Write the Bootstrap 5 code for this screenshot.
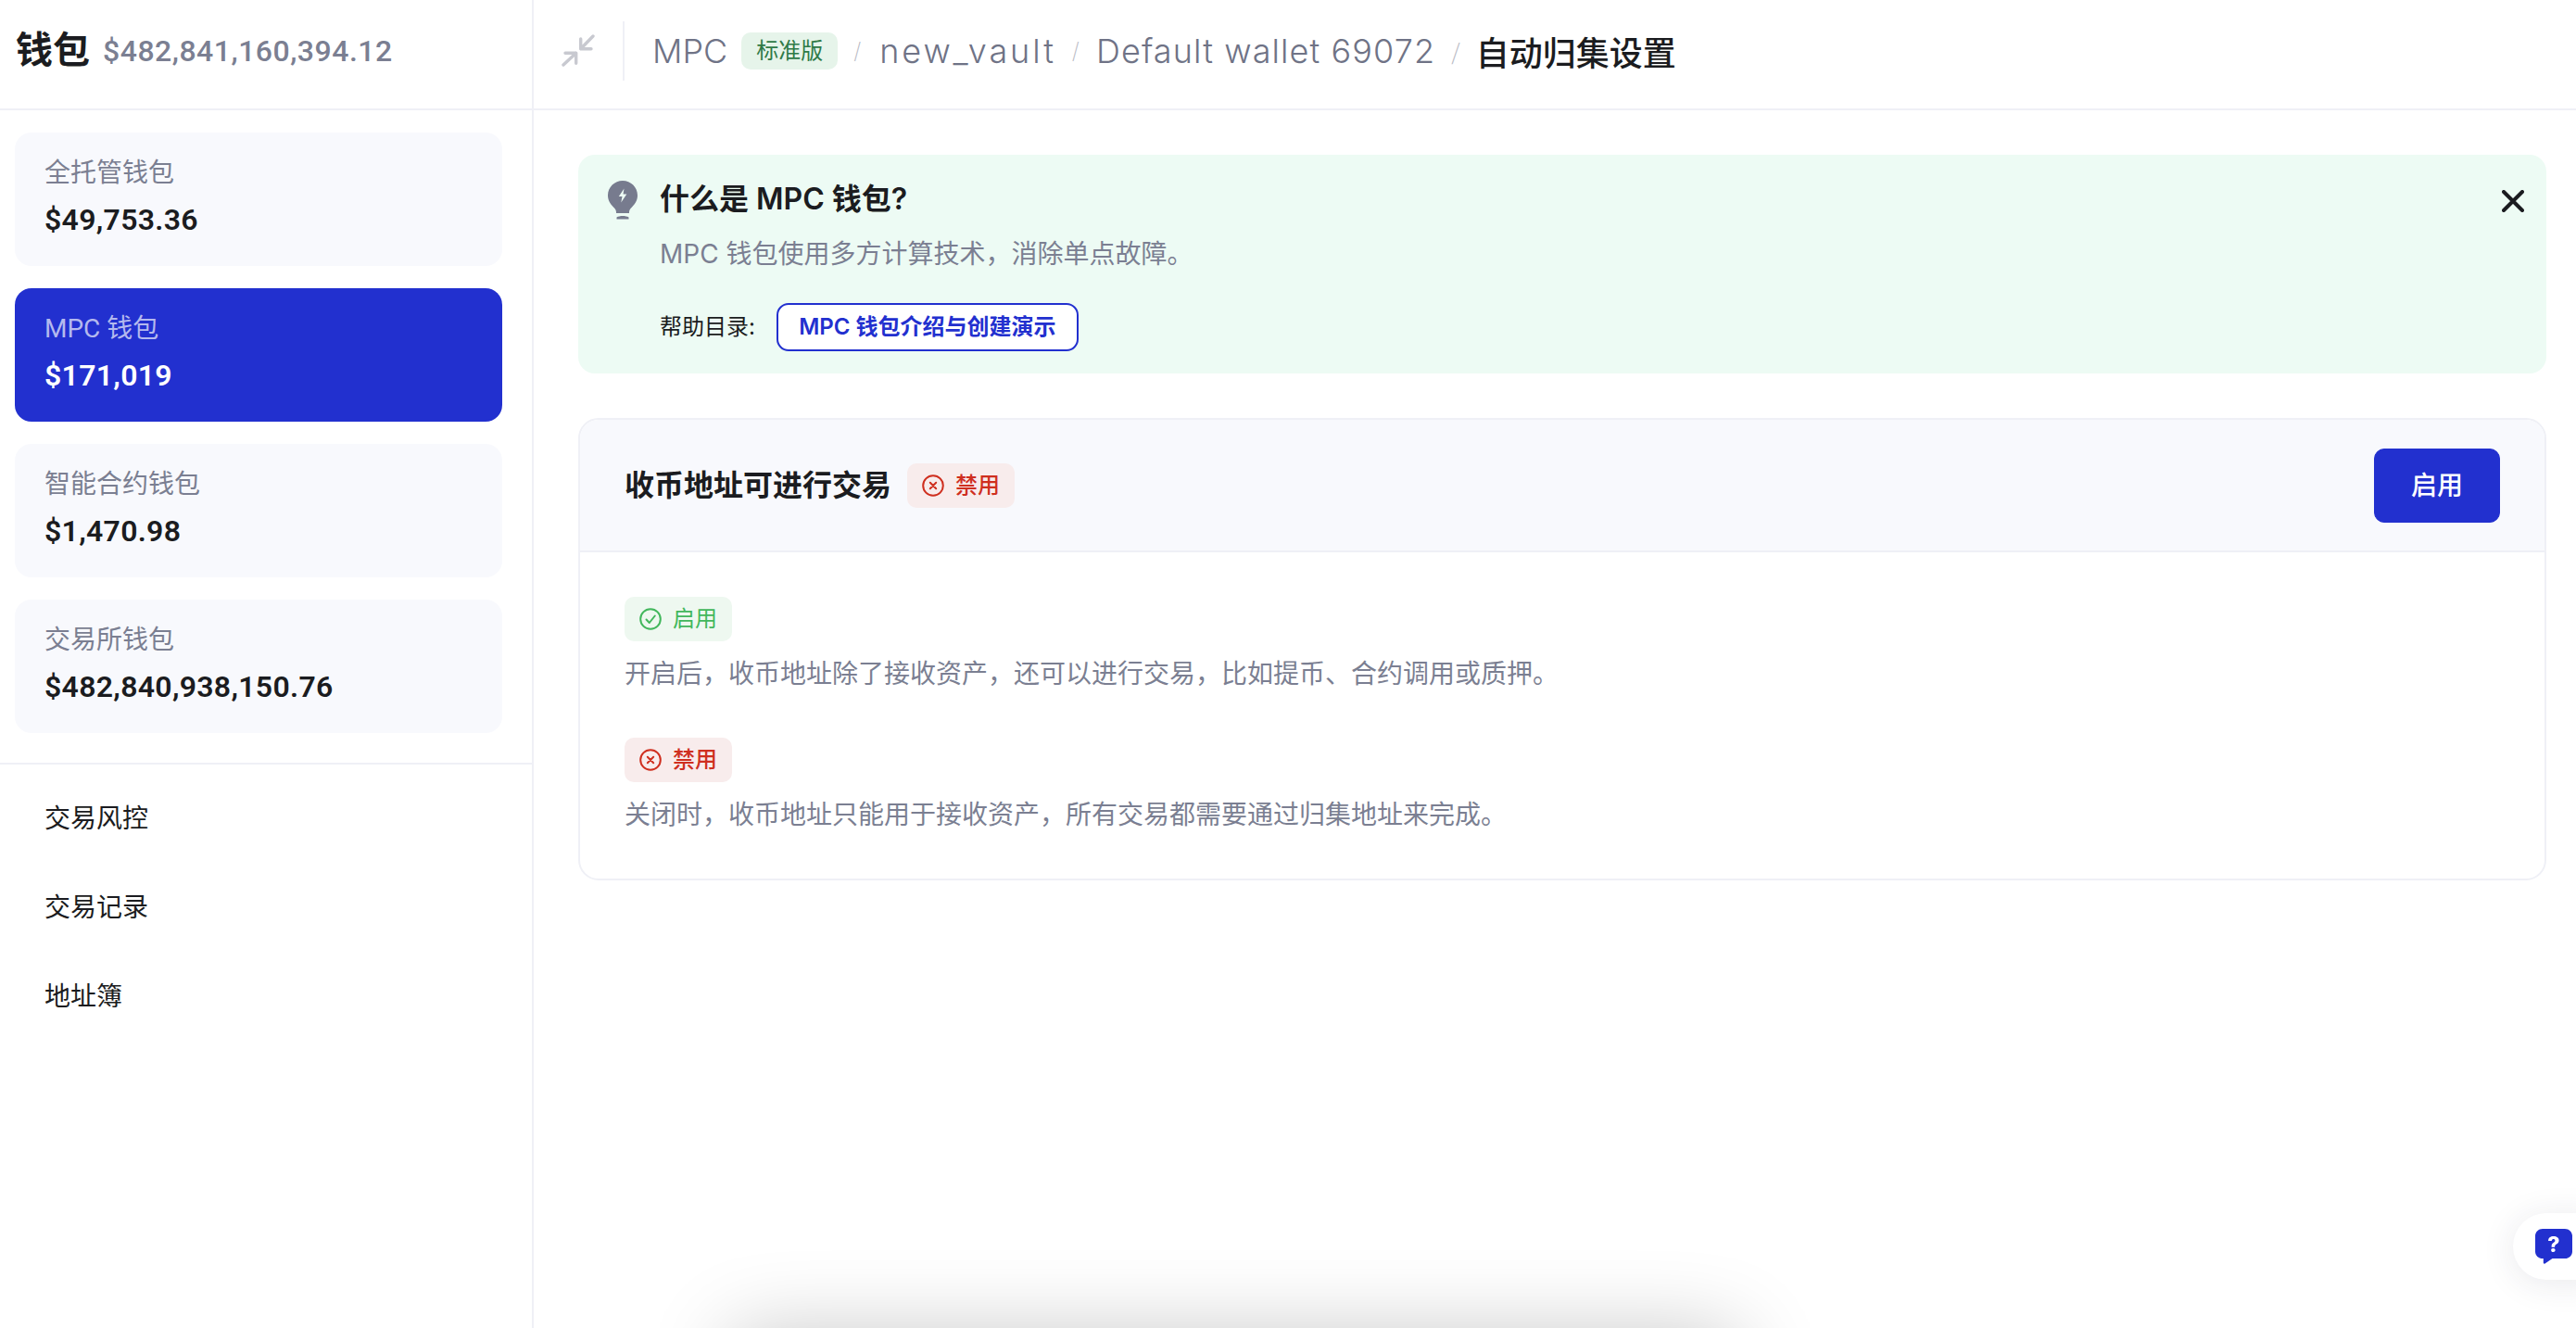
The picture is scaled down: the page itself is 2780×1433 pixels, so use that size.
<!DOCTYPE html>
<html lang="zh">
<head>
<meta charset="utf-8">
<title>自动归集设置</title>
<link href="https://cdn.jsdelivr.net/npm/bootstrap@5.3.0/dist/css/bootstrap.min.css" rel="stylesheet">
<style>
:root{--wl-blue:#2230cf;--wl-line:#eff0f6;--wl-soft:#f8f9fd;--wl-grey:#7b7f92;--wl-ink:#1b1c20;}
html,body{height:100%;}
body{overflow:hidden;background:#fff;color:var(--wl-ink);font-family:Inter,"Noto Sans CJK SC",sans-serif;}
.wl-side{width:576px;flex:none;border-right:2px solid var(--wl-line);font-family:Roboto,"Noto Sans CJK SC",sans-serif;}
.wl-head{height:119px;flex:none;border-bottom:2px solid var(--wl-line);padding-bottom:7px;}
.wl-side-head{padding-left:17px;gap:14px;}
.wl-side-title{font-size:40px;font-weight:700;line-height:1;}
.wl-total{font-size:32px;font-weight:500;color:var(--wl-grey);letter-spacing:.5px;}
.wl-list{padding:24px 32px 32px 16px;gap:24px;border-bottom:2px solid var(--wl-line);}
.wl-tile{height:144px;border-radius:18px;background:var(--wl-soft);padding:24px 32px 0;}
.wl-tile-label{font-size:28px;line-height:40px;color:var(--wl-grey);}
.wl-tile-value{font-size:32px;line-height:44px;margin-top:8px;font-weight:600;letter-spacing:.3px;}
.wl-tile-on{background:var(--wl-blue);}
.wl-tile-on .wl-tile-label{color:#b4b9ee;}
.wl-tile-on .wl-tile-value{color:#fff;}
.wl-menu{padding:11px 0 0 48px;}
.wl-menu a{display:block;height:96px;line-height:96px;font-size:28px;color:var(--wl-ink);text-decoration:none;}
.wl-top{padding-left:30px;}
.wl-vline{width:2px;height:64px;background:var(--wl-line);margin:0 30px 0 30px;}
.wl-crumb{--bs-breadcrumb-margin-bottom:0;--bs-breadcrumb-divider-color:#b8bac4;--bs-breadcrumb-item-padding-x:17px;--bs-breadcrumb-item-active-color:var(--wl-ink);font-size:36px;font-weight:300;color:#6f7386;align-items:center;}
.wl-crumb .breadcrumb-item{display:flex;align-items:center;}
.wl-crumb .breadcrumb-item+.breadcrumb-item::before{font-size:24px;font-weight:200;}
.wl-crumb .breadcrumb-item.active{font-weight:500;font-family:"Noto Sans CJK SC",sans-serif;}
.wl-crumb-vault{letter-spacing:2.9px;}
.wl-crumb-wallet{letter-spacing:1.1px;}
.wl-edition{background:#e6f4ea;color:#2f7a47;font-size:24px;font-weight:400;letter-spacing:0;height:40px;width:104px;border-radius:10px;line-height:40px;text-align:center;margin-left:15px;}
.wl-main{padding:48px 32px 0 48px;min-width:0;}
.wl-notice{background:#edfbf4;border-radius:18px;height:236px;padding:24px 32px 0;border:0;margin-bottom:48px;}
.wl-notice-icon{width:32px;height:42px;margin:4px 24px 0 0;flex:none;}
.wl-notice-title{font-size:32px;line-height:48px;font-weight:600;margin:0;}
.wl-desc{font-size:28px;line-height:44px;color:var(--wl-grey);margin:0;}
.wl-notice .wl-desc{margin-top:13px;}
.wl-help{margin-top:31px;font-size:24px;gap:23px;}
.wl-help-btn{height:52px;width:326px;border:2px solid var(--wl-blue);border-radius:13px;color:var(--wl-blue);font-size:24px;font-weight:600;padding:0;line-height:48px;background:#fff;}
.wl-close{position:absolute;top:36px;right:24px;width:24px;height:24px;background:none;border:0;padding:0;display:block;}
.wl-panel{border:2px solid var(--wl-line);border-radius:22px;height:499px;}
.wl-panel-head{background:var(--wl-soft);height:144px;padding:0 48px;border-bottom:2px solid var(--wl-line);border-radius:20px 20px 0 0!important;}
.wl-panel-title{font-size:32px;font-weight:600;margin:0 17px 0 0;line-height:48px;}
.wl-pill{display:inline-flex;align-items:center;width:116px;height:48px;border-radius:10px;padding-left:16px;gap:12px;font-size:24px;font-weight:500;line-height:1;}
.wl-pill svg{width:24px;height:24px;flex:none;}
.wl-pill-off{background:#f8ecec;color:#cf2f1f;}
.wl-pill-on{background:#eef8f0;color:#42b75c;font-weight:400;}
.wl-enable{width:136px;height:80px;background:var(--wl-blue);border-color:var(--wl-blue);border-radius:11px;font-size:28px;font-weight:500;padding:0;}
.wl-panel-body{padding:48px 48px 0;}
.wl-panel-body .wl-desc{margin:13px 0 47px;}
.wl-float{position:fixed;left:2712px;top:1309px;width:110px;height:72px;border-radius:36px;background:#fff;box-shadow:0 4px 36px rgba(40,44,70,.1);padding:17px 0 0 24px;}
.wl-float svg{display:block;width:40px;height:38px;}
.wl-drop{position:fixed;left:790px;top:1440px;width:1085px;height:200px;box-shadow:0 0 90px rgba(0,0,0,.23);background:#fff;}
</style>
</head>
<body>
<div class="d-flex h-100">
  <aside class="wl-side d-flex flex-column">
    <div class="wl-head wl-side-head d-flex align-items-center">
      <span class="wl-side-title">钱包</span>
      <span class="wl-total">$482,841,160,394.12</span>
    </div>
    <div class="wl-list d-flex flex-column">
      <div class="wl-tile"><div class="wl-tile-label">全托管钱包</div><div class="wl-tile-value">$49,753.36</div></div>
      <div class="wl-tile wl-tile-on"><div class="wl-tile-label">MPC 钱包</div><div class="wl-tile-value">$171,019</div></div>
      <div class="wl-tile"><div class="wl-tile-label">智能合约钱包</div><div class="wl-tile-value">$1,470.98</div></div>
      <div class="wl-tile"><div class="wl-tile-label">交易所钱包</div><div class="wl-tile-value">$482,840,938,150.76</div></div>
    </div>
    <nav class="wl-menu">
      <a href="#">交易风控</a>
      <a href="#">交易记录</a>
      <a href="#">地址簿</a>
    </nav>
  </aside>
  <div class="flex-grow-1 d-flex flex-column" style="min-width:0">
    <header class="wl-head wl-top d-flex align-items-center">
      <svg width="36" height="36" viewBox="0 0 36 36" fill="none" stroke="#c8c9d0" stroke-width="3.4" stroke-linecap="round" stroke-linejoin="round" aria-hidden="true">
        <path d="M34 2 20.700 15.700M20.700 5v10.700H32M2 33 15.700 20.300M4 20.300h11.700V31.300"/>
      </svg>
      <span class="wl-vline"></span>
      <ol class="breadcrumb wl-crumb">
        <li class="breadcrumb-item">MPC<span class="wl-edition">标准版</span></li>
        <li class="breadcrumb-item wl-crumb-vault">new_vault</li>
        <li class="breadcrumb-item wl-crumb-wallet">Default wallet 69072</li>
        <li class="breadcrumb-item active">自动归集设置</li>
      </ol>
    </header>
    <main class="wl-main flex-grow-1">
      <section class="wl-notice position-relative d-flex">
        <svg class="wl-notice-icon" viewBox="0 0 32 42" aria-hidden="true">
          <path fill="#777b8e" d="M16 0C7.200 0 0 7 0 15.800c0 5.200 2.500 9.400 6 12.600 1.800 1.700 3 3.200 3 5.600h14c0-2.400 1.200-3.900 3-5.600 3.500-3.200 6-7.400 6-12.600C32 7 24.800 0 16 0Z"/>
          <path fill="#777b8e" d="M9 34h14v1H9zM9.500 39.500c3-2 10-2 13 0v2h-13z"/>
          <path fill="#edfbf4" d="M17.500 8.500 11.800 17h3.700l-1.200 6.500 6-9h-3.800z"/>
        </svg>
        <div>
          <h2 class="wl-notice-title">什么是 MPC 钱包?</h2>
          <p class="wl-desc">MPC 钱包使用多方计算技术，消除单点故障。</p>
          <div class="wl-help d-flex align-items-center">
            <span>帮助目录:</span>
            <button type="button" class="btn wl-help-btn">MPC 钱包介绍与创建演示</button>
          </div>
        </div>
        <button type="button" class="wl-close" aria-label="关闭">
          <svg width="24" height="24" viewBox="0 0 24 24" fill="none" stroke="#1b1c20" stroke-width="4" stroke-linecap="round"><path d="M2 2 22 22M22 2 2 22"/></svg>
        </button>
      </section>
      <section class="card wl-panel">
        <div class="card-header wl-panel-head d-flex align-items-center">
          <h3 class="wl-panel-title">收币地址可进行交易</h3>
          <span class="wl-pill wl-pill-off">
            <svg viewBox="0 0 24 24" fill="none" stroke="currentColor" stroke-width="2" stroke-linecap="round"><circle cx="12" cy="12" r="10.800"/><path d="M8.800 8.800 15.200 15.200M15.200 8.800 8.800 15.200"/></svg>禁用
          </span>
          <button type="button" class="btn btn-primary wl-enable ms-auto">启用</button>
        </div>
        <div class="card-body wl-panel-body">
          <span class="wl-pill wl-pill-on">
            <svg viewBox="0 0 24 24" fill="none" stroke="currentColor" stroke-width="2" stroke-linecap="round" stroke-linejoin="round"><circle cx="12" cy="12" r="10.800"/><path d="M7.500 12.500 10.800 16 16.800 8.500"/></svg>启用
          </span>
          <p class="wl-desc">开启后，收币地址除了接收资产，还可以进行交易，比如提币、合约调用或质押。</p>
          <span class="wl-pill wl-pill-off">
            <svg viewBox="0 0 24 24" fill="none" stroke="currentColor" stroke-width="2" stroke-linecap="round"><circle cx="12" cy="12" r="10.800"/><path d="M8.800 8.800 15.200 15.200M15.200 8.800 8.800 15.200"/></svg>禁用
          </span>
          <p class="wl-desc">关闭时，收币地址只能用于接收资产，所有交易都需要通过归集地址来完成。</p>
        </div>
      </section>
    </main>
  </div>
</div>
<div class="wl-drop"></div>
<div class="wl-float">
  <svg viewBox="0 0 40 38" aria-hidden="true">
    <path fill="#2230cf" d="M8 0h24c4.400 0 8 3.400 8 7.600v16.800c0 4.200-3.600 7.600-8 7.600H18.500l-8 5.600c-.8.500-1.700 0-1.700-1V32H8c-4.400 0-8-3.400-8-7.600V7.600C0 3.400 3.600 0 8 0Z"/>
    <text x="20" y="25" text-anchor="middle" font-family="Inter,sans-serif" font-size="23" font-weight="800" fill="#fff">?</text>
  </svg>
</div>
<script src="https://cdn.jsdelivr.net/npm/bootstrap@5.3.0/dist/js/bootstrap.bundle.min.js"></script>
</body>
</html>
